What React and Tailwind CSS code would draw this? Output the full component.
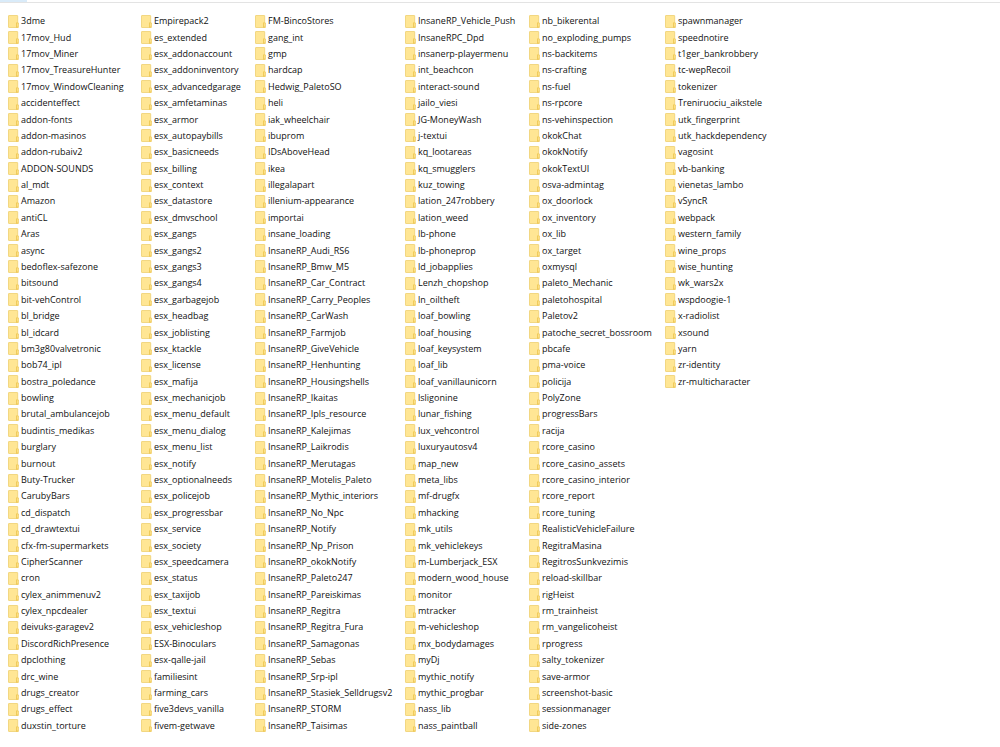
const folders = [
  "3dme", "17mov_Hud", "17mov_Miner", "17mov_TreasureHunter", "17mov_WindowCleaning", "accidenteffect",
  "addon-fonts", "addon-masinos", "addon-rubaiv2", "ADDON-SOUNDS", "al_mdt", "Amazon", "antiCL", "Aras",
  "async", "bedoflex-safezone", "bitsound", "bit-vehControl", "bl_bridge", "bl_idcard", "bm3g80valvetronic",
  "bob74_ipl", "bostra_poledance", "bowling", "brutal_ambulancejob", "budintis_medikas", "burglary", "burnout",
  "Buty-Trucker", "CarubyBars", "cd_dispatch", "cd_drawtextui", "cfx-fm-supermarkets", "CipherScanner", "cron",
  "cylex_animmenuv2", "cylex_npcdealer", "deivuks-garagev2", "DiscordRichPresence", "dpclothing", "drc_wine",
  "drugs_creator", "drugs_effect", "duxstin_torture",
  "Empirepack2", "es_extended", "esx_addonaccount", "esx_addoninventory", "esx_advancedgarage",
  "esx_amfetaminas", "esx_armor", "esx_autopaybills", "esx_basicneeds", "esx_billing", "esx_context",
  "esx_datastore", "esx_dmvschool", "esx_gangs", "esx_gangs2", "esx_gangs3", "esx_gangs4", "esx_garbagejob",
  "esx_headbag", "esx_joblisting", "esx_ktackle", "esx_license", "esx_mafija", "esx_mechanicjob",
  "esx_menu_default", "esx_menu_dialog", "esx_menu_list", "esx_notify", "esx_optionalneeds", "esx_policejob",
  "esx_progressbar", "esx_service", "esx_society", "esx_speedcamera", "esx_status", "esx_taxijob",
  "esx_textui", "esx_vehicleshop", "ESX-Binoculars", "esx-qalle-jail", "familiesint", "farming_cars",
  "five3devs_vanilla", "fivem-getwave",
  "FM-BincoStores", "gang_int", "gmp", "hardcap", "Hedwig_PaletoSO", "heli", "iak_wheelchair", "ibuprom",
  "IDsAboveHead", "ikea", "illegalapart", "illenium-appearance", "importai", "insane_loading",
  "InsaneRP_Audi_RS6", "InsaneRP_Bmw_M5", "InsaneRP_Car_Contract", "InsaneRP_Carry_Peoples",
  "InsaneRP_CarWash", "InsaneRP_Farmjob", "InsaneRP_GiveVehicle", "InsaneRP_Henhunting",
  "InsaneRP_Housingshells", "InsaneRP_Ikaitas", "InsaneRP_Ipls_resource", "InsaneRP_Kalejimas",
  "InsaneRP_Laikrodis", "InsaneRP_Merutagas", "InsaneRP_Motelis_Paleto", "InsaneRP_Mythic_interiors",
  "InsaneRP_No_Npc", "InsaneRP_Notify", "InsaneRP_Np_Prison", "InsaneRP_okokNotify", "InsaneRP_Paleto247",
  "InsaneRP_Pareiskimas", "InsaneRP_Regitra", "InsaneRP_Regitra_Fura", "InsaneRP_Samagonas",
  "InsaneRP_Sebas", "InsaneRP_Srp-ipl", "InsaneRP_Stasiek_Selldrugsv2", "InsaneRP_STORM", "InsaneRP_Taisimas",
  "InsaneRP_Vehicle_Push", "InsaneRPC_Dpd", "insanerp-playermenu", "int_beachcon", "interact-sound",
  "jailo_viesi", "JG-MoneyWash", "j-textui", "kq_lootareas", "kq_smugglers", "kuz_towing",
  "lation_247robbery", "lation_weed", "lb-phone", "lb-phoneprop", "ld_jobapplies", "Lenzh_chopshop",
  "ln_oiltheft", "loaf_bowling", "loaf_housing", "loaf_keysystem", "loaf_lib", "loaf_vanillaunicorn",
  "lsligonine", "lunar_fishing", "lux_vehcontrol", "luxuryautosv4", "map_new", "meta_libs", "mf-drugfx",
  "mhacking", "mk_utils", "mk_vehiclekeys", "m-Lumberjack_ESX", "modern_wood_house", "monitor", "mtracker",
  "m-vehicleshop", "mx_bodydamages", "myDj", "mythic_notify", "mythic_progbar", "nass_lib", "nass_paintball",
  "nb_bikerental", "no_exploding_pumps", "ns-backitems", "ns-crafting", "ns-fuel", "ns-rpcore",
  "ns-vehinspection", "okokChat", "okokNotify", "okokTextUI", "osva-admintag", "ox_doorlock",
  "ox_inventory", "ox_lib", "ox_target", "oxmysql", "paleto_Mechanic", "paletohospital", "Paletov2",
  "patoche_secret_bossroom", "pbcafe", "pma-voice", "policija", "PolyZone", "progressBars", "racija",
  "rcore_casino", "rcore_casino_assets", "rcore_casino_interior", "rcore_report", "rcore_tuning",
  "RealisticVehicleFailure", "RegitraMasina", "RegitrosSunkvezimis", "reload-skillbar", "rigHeist",
  "rm_trainheist", "rm_vangelicoheist", "rprogress", "salty_tokenizer", "save-armor", "screenshot-basic",
  "sessionmanager", "side-zones",
  "spawnmanager", "speednotire", "t1ger_bankrobbery", "tc-wepRecoil", "tokenizer", "Treniruociu_aikstele",
  "utk_fingerprint", "utk_hackdependency", "vagosint", "vb-banking", "vienetas_lambo", "vSyncR", "webpack",
  "western_family", "wine_props", "wise_hunting", "wk_wars2x", "wspdoogie-1", "x-radiolist", "xsound",
  "yarn", "zr-identity", "zr-multicharacter",
]

function FolderIcon() {
  return (
    <svg viewBox="0 0 11 13" className="h-[13px] w-[11px] shrink-0" aria-hidden="true">
      <rect x="0.5" y="0.5" width="9.2" height="12" rx="0.4" fill="#ffe694" stroke="#f1d479" strokeWidth="0.9" />
      <path d="M8 7.6h2.2l0.5 0.7v4.4H8z" fill="#efc957" />
      <path d="M8.9 8.2h1.1v3.4H8.9z" fill="#fbdf86" />
    </svg>
  )
}

function Folder({ name }) {
  return (
    <li className="flex min-h-0 items-center gap-[2px] whitespace-nowrap">
      <FolderIcon />
      <span>{name}</span>
    </li>
  )
}

function App() {
  return (
    <div className="flex h-screen flex-col bg-white font-['Open_Sans','Noto_Sans',sans-serif] text-[9px] leading-3 text-[#111111]">
      {/* Bottom edge of the column header */}
      <div className="h-[3px] shrink-0 border-b border-[#e3e3e3]">
        <div className="h-full w-[27px] bg-[#d9ebf9]" />
      </div>

      {/* List view, filled top to bottom */}
      <ul className="grid min-h-0 flex-1 grid-flow-col grid-cols-[133px_114px_150px_124px_136px_1fr] grid-rows-[repeat(44,minmax(0,1fr))] pt-[10px] pb-[13px] pl-2">
        {folders.map((name) => (
          <Folder key={name} name={name} />
        ))}
      </ul>
    </div>
  )
}

export default App
